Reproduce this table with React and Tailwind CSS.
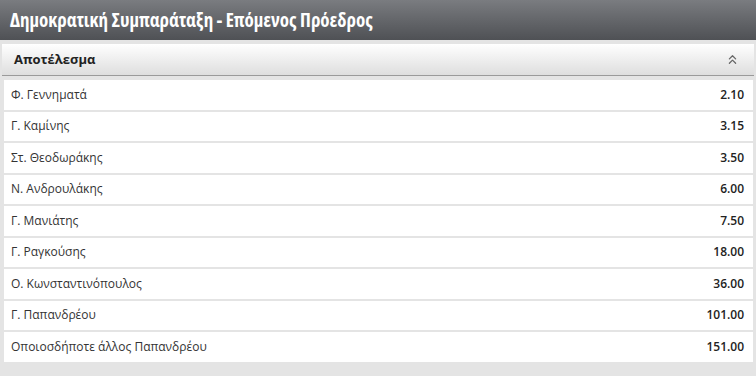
import { ChevronsUp } from "lucide-react";

const rows = [
  ["Φ. Γεννηματά", "2.10"],
  ["Γ. Καμίνης", "3.15"],
  ["Στ. Θεοδωράκης", "3.50"],
  ["Ν. Ανδρουλάκης", "6.00"],
  ["Γ. Μανιάτης", "7.50"],
  ["Γ. Ραγκούσης", "18.00"],
  ["Ο. Κωνσταντινόπουλος", "36.00"],
  ["Γ. Παπανδρέου", "101.00"],
  ["Οποιοσδήποτε άλλος Παπανδρέου", "151.00"],
];

export default function App() {
  return (
    <div className="h-[376px] w-[756px] overflow-hidden bg-[#e4e4e4] font-['Open_Sans',sans-serif]">
      <div className="flex h-[40px] items-center bg-gradient-to-b from-[#7a7c80] to-[#4f5155] px-[10px]">
        <h1 className="text-[19px] font-bold text-white font-stretch-condensed">
          Δημοκρατική Συμπαράταξη - Επόμενος Πρόεδρος
        </h1>
      </div>

      <div className="px-[2px] pt-[4px]">
        <div className="flex h-[32px] items-center justify-between border-b border-[#9a9a9a] bg-gradient-to-b from-white to-[#dedede] pl-[12px] pr-[14px]">
          <span className="text-[13px] font-bold text-[#222]">Αποτέλεσμα</span>
          <ChevronsUp className="h-[15px] w-[15px] text-[#666]" strokeWidth={2} />
        </div>
      </div>

      <div className="flex flex-col gap-[2px] pl-[4px] pr-[3px] pt-[4px]">
        {rows.map(([name, odds]) => (
          <div
            key={name}
            className="flex h-[29.5px] items-center justify-between bg-white pl-[7px] pr-[9px] text-[12px]"
          >
            <span className="text-[#333]">{name}</span>
            <span className="font-semibold text-[#222]">{odds}</span>
          </div>
        ))}
      </div>
    </div>
  );
}
